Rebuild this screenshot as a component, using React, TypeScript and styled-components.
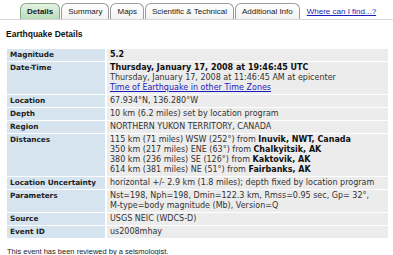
import React from "react";
import styled, { createGlobalStyle, css } from "styled-components";

const Global = createGlobalStyle`
  html, body { margin: 0; padding: 0; background: #fff; }
  body { width: 393px; height: 255px; overflow: hidden; }
`;

const Page = styled.div`
  font-family: "Liberation Sans", Arial, sans-serif;
  color: #111;
`;

const TabBar = styled.div`
  display: flex;
  align-items: flex-end;
  gap: 1px;
  height: 19px;
  padding-left: 20px;
  border-bottom: 1px solid #d6d6d6;
`;

const Tab = styled.div<{ $active?: boolean }>`
  height: 15px;
  padding: 0 6px;
  display: flex;
  align-items: center;
  font-size: 8px;
  color: #222;
  border: 1px solid #9c9c9c;
  border-bottom: none;
  border-radius: 6px 6px 0 0;
  background: linear-gradient(#ffffff, #f3f3f3);
  ${({ $active }) =>
    $active &&
    css`
      font-weight: bold;
      border-color: #86a886;
      background: linear-gradient(#e4f3e4, #b9dcb9);
    `}
`;

const HelpLink = styled.a`
  align-self: center;
  margin: 4px 0 0 6px;
  font-size: 8px;
  color: #1c1cb8;
  text-decoration: underline;
`;

const Heading = styled.h2`
  margin: 9px 0 0 6px;
  font-size: 8.5px;
  font-weight: bold;
`;

const Table = styled.table`
  margin: 9px 0 0 5px;
  width: 385px;
  border-collapse: separate;
  border-spacing: 2px 1px;
  font-family: "DejaVu Sans", Verdana, sans-serif;
  font-size: 8px;
  line-height: 10px;
`;

const Label = styled.th`
  width: 92px;
  padding: 1px 3px 1px;
  text-align: left;
  vertical-align: top;
  font-size: 7.3px;
  font-weight: bold;
  color: #222;
  background: #d6e4ef;
`;

const Value = styled.td<{ $strong?: boolean }>`
  padding: 1px 3px 1px;
  vertical-align: top;
  color: #333;
  background: #ececec;
  font-weight: ${({ $strong }) => ($strong ? "bold" : "normal")};
  ${({ $strong }) => $strong && "color: #111;"}
  white-space: nowrap;
`;

const Lead = styled.div`
  font-weight: bold;
  color: #111;
`;

const TimeLink = styled.a`
  color: #1c1cb8;
  text-decoration: underline;
`;

const Dist = styled.div`
  white-space: pre;
  b { color: #111; }
`;

const Footer = styled.p`
  margin: 8px 0 0 7px;
  font-size: 7.5px;
  color: #222;
`;

const tabs = ["Details", "Summary", "Maps", "Scientific & Technical", "Additional Info"];

const distances = [
  ["115 km (71 miles) WSW (252°) from ", "Inuvik, NWT, Canada"],
  ["350 km (217 miles) ENE (63°) from ", "Chalkyitsik, AK"],
  ["380 km (236 miles) SE (126°) from ", "Kaktovik, AK"],
  ["614 km (381 miles) NE (51°) from ", "Fairbanks, AK"],
];

const App = () => {
  return (
    <Page>
      <Global />
      <TabBar>
        {tabs.map((t) => (
          <Tab key={t} $active={t === "Details"}>
            {t}
          </Tab>
        ))}
        <HelpLink href="#">Where can I find...?</HelpLink>
      </TabBar>
      <Heading>Earthquake Details</Heading>
      <Table>
        <tbody>
          <tr>
            <Label>Magnitude</Label>
            <Value $strong>5.2</Value>
          </tr>
          <tr>
            <Label>Date-Time</Label>
            <Value>
              <Lead>Thursday, January 17, 2008 at 19:46:45 UTC</Lead>
              <div>Thursday, January 17, 2008 at 11:46:45 AM at epicenter</div>
              <TimeLink href="#">Time of Earthquake in other Time Zones</TimeLink>
            </Value>
          </tr>
          <tr>
            <Label>Location</Label>
            <Value>67.934°N, 136.280°W</Value>
          </tr>
          <tr>
            <Label>Depth</Label>
            <Value>10 km (6.2 miles) set by location program</Value>
          </tr>
          <tr>
            <Label>Region</Label>
            <Value>NORTHERN YUKON TERRITORY, CANADA</Value>
          </tr>
          <tr>
            <Label>Distances</Label>
            <Value>
              {distances.map(([d, place]) => (
                <Dist key={place}>
                  {d}
                  <b>{place}</b>
                </Dist>
              ))}
            </Value>
          </tr>
          <tr>
            <Label>Location Uncertainty</Label>
            <Value>horizontal +/- 2.9 km (1.8 miles); depth fixed by location program</Value>
          </tr>
          <tr>
            <Label>Parameters</Label>
            <Value>
              <div>Nst=198, Nph=198, Dmin=122.3 km, Rmss=0.95 sec, Gp= 32°,</div>
              <div>M-type=body magnitude (Mb), Version=Q</div>
            </Value>
          </tr>
          <tr>
            <Label>Source</Label>
            <Value>USGS NEIC (WDCS-D)</Value>
          </tr>
          <tr>
            <Label>Event ID</Label>
            <Value>us2008mhay</Value>
          </tr>
        </tbody>
      </Table>
      <Footer>This event has been reviewed by a seismologist.</Footer>
    </Page>
  );
};

export default App;
